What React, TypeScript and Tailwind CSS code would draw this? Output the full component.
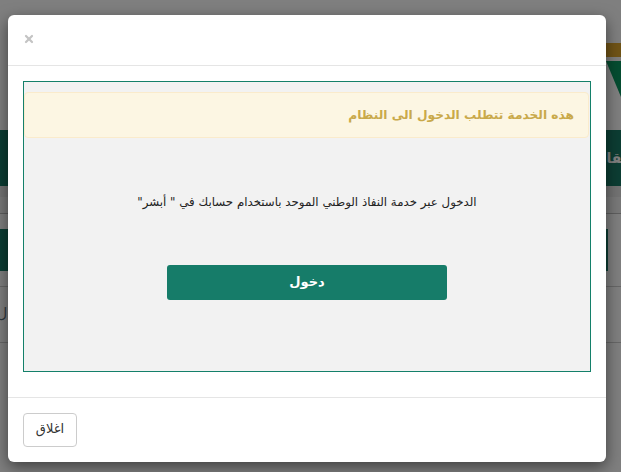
import { X } from 'lucide-react';

function BackPage() {
  return (
    <div className="flex h-[472px] w-[621px] flex-col overflow-hidden bg-white" dir="rtl">
      {/* top header, only the logo edge shows beside the modal */}
      <div className="flex h-[130px] flex-col pt-[43px]">
        <div className="h-[14px] w-[15px] bg-[#e0a82e]" />
        <div className="mt-[4px] flex w-[15px] flex-col">
          <svg width="15" height="36" viewBox="0 0 15 36">
            <polygon points="15,0 0,0 15,36" fill="#0a9a63" />
          </svg>
        </div>
      </div>
      <div className="flex h-[56px] shrink-0 items-center overflow-hidden bg-[#187a66] text-[14px] font-bold text-white">
        <span className="mr-[-11px] whitespace-nowrap">القائمة</span>
      </div>
      <div className="h-[11px] shrink-0 bg-[#e6e6e6]" />
      <div className="h-[17px] shrink-0 border-b border-[#bdbdbd] bg-[#f2f2f2]" />
      <div className="mt-[15px] mr-[13px] h-[42px] shrink-0 bg-[#187a66]" />
      <div className="mt-[15px] flex h-[57px] shrink-0 items-center justify-end overflow-hidden border-y border-[#cfcfcf] text-[14px] text-[#5a7080]">
        <span className="ml-[-3px] mb-[2px]">ل</span>
      </div>
    </div>
  );
}

export default function App() {
  return (
    <div className="relative h-[472px] w-[621px] overflow-hidden font-['DejaVu_Sans',sans-serif]">
      <BackPage />
      <div className="absolute inset-0 bg-black/50" />
      <div className="absolute left-[8px] top-[15px] flex h-[447px] w-[598px] flex-col rounded-[6px] bg-white shadow-[0_5px_15px_rgba(0,0,0,0.5)]">
        <div className="flex h-[51px] items-center border-b border-[#e5e5e5] px-[15px] pb-[2px]">
          <X className="h-[12px] w-[12px] text-[#c4c4c4]" strokeWidth={4.5} />
        </div>
        <div className="flex-1 px-[15px] pt-[15px]">
          <div className="flex h-[291px] flex-col border border-[#14806a] bg-[#f2f2f2]" dir="rtl">
            <div className="mr-px mt-[10px] flex h-[46px] items-center rounded-[4px] border border-[#faebcc] bg-[#fcf6e3] px-[14px] text-[12.2px] font-bold text-[#c9a94a]">
              هذه الخدمة تتطلب الدخول الى النظام
            </div>
            <p className="mt-[56px] text-center text-[11.8px] text-[#222]">
              الدخول عبر خدمة النفاذ الوطني الموحد باستخدام حسابك في " أبشر"
            </p>
            <button className="mx-auto mt-[53px] h-[35px] w-[280px] rounded-[3px] bg-[#167c69] text-[13px] font-bold text-white">
              دخول
            </button>
          </div>
        </div>
        <div className="flex h-[65px] items-center border-t border-[#e5e5e5] px-[15px]">
          <button className="h-[34px] w-[54px] rounded-[4px] border border-[#cccccc] bg-white pb-[2px] text-[13px] text-[#333]">
            اغلاق
          </button>
        </div>
      </div>
    </div>
  );
}
